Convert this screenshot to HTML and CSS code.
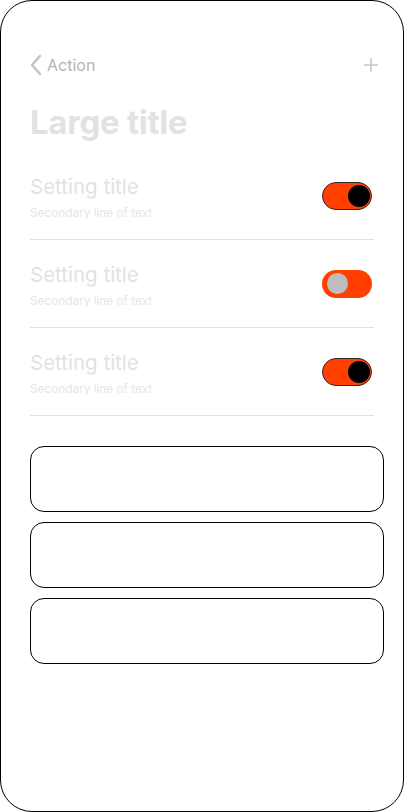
FILE: index.html
```html
<!DOCTYPE html>
<html>
<head>
<meta charset="utf-8">
<link rel="stylesheet" href="styles.css">
</head>
<body>
<div class="phone">
  <div class="nav">
    <div class="back">
      <svg class="chev" width="14" height="22" viewBox="0 0 14 22"><path d="M11 2 L3 11 L11 20" fill="none" stroke="#c4c4c4" stroke-width="2.6" stroke-linecap="round" stroke-linejoin="round"/></svg>
      <span class="back-label">Action</span>
    </div>
    <svg class="plus" width="16" height="16" viewBox="0 0 16 16"><path d="M8 1 V15 M1 8 H15" stroke="#c8c8c8" stroke-width="1.6"/></svg>
  </div>
  <h1 class="title">Large title</h1>
  <div class="list">
    <div class="row">
      <div class="texts">
        <div class="row-title">Setting title</div>
        <div class="row-sub">Secondary line of text</div>
      </div>
      <div class="toggle on"><span class="knob"></span></div>
    </div>
    <div class="row">
      <div class="texts">
        <div class="row-title">Setting title</div>
        <div class="row-sub">Secondary line of text</div>
      </div>
      <div class="toggle off"><span class="knob"></span></div>
    </div>
    <div class="row">
      <div class="texts">
        <div class="row-title">Setting title</div>
        <div class="row-sub">Secondary line of text</div>
      </div>
      <div class="toggle on"><span class="knob"></span></div>
    </div>
  </div>
  <div class="cards">
    <div class="card"></div>
    <div class="card"></div>
    <div class="card"></div>
  </div>
</div>
</body>
</html>
```
FILE: styles.css
```css
* { box-sizing: border-box; }
html, body { margin: 0; padding: 0; background: #fff; }
body { font-family: Inter, "Noto Sans", sans-serif; }
.phone {
  width: 404px;
  height: 812px;
  border: 1px solid #000;
  border-radius: 32px;
  padding: 54px 19px 0 29px;
  background: #fff;
  overflow: hidden;
}
.nav {
  height: 20px;
  margin-right: 5px;
  display: flex;
  align-items: center;
  justify-content: space-between;
}
.back { display: flex; align-items: center; gap: 4px; }
.chev { display: block; margin-left: -1px; }
.back-label { font-size: 16px; color: #b4b4b4; line-height: 20px; }
.plus { display: block; }
.title {
  margin: 27px 0 10px 0;
  height: 40px;
  font-size: 33px;
  line-height: 40px;
  font-weight: 700;
  color: #e2e2e2;
  letter-spacing: -0.3px;
}
.list { margin-right: 10px; }
.row {
  height: 88px;
  border-bottom: 1px solid #e2e2e2;
  display: flex;
  align-items: center;
  justify-content: space-between;
}
.texts { display: flex; flex-direction: column; gap: 7px; margin-top: 4px; }
.row-title { font-size: 20.5px; line-height: 24px; color: #e2e2e2; }
.row-sub { font-size: 11.8px; line-height: 14px; color: #e6e6e6; }
.toggle {
  width: 50px;
  height: 28px;
  border-radius: 14px;
  background: #ff4000;
  margin-right: 2px;
  display: flex;
  align-items: center;
}
.toggle.on { border: 1px solid #2a2a2a; justify-content: flex-end; padding-right: 1px; }
.toggle.on .knob { width: 22px; height: 22px; border-radius: 50%; background: #000; }
.toggle.off { justify-content: flex-start; padding-left: 5px; }
.toggle.off .knob { width: 21px; height: 21px; border-radius: 50%; background: #bdbdbd; }
.cards {
  margin-top: 30px;
  display: flex;
  flex-direction: column;
  gap: 10px;
}
.card {
  height: 66px;
  border: 1px solid #000;
  border-radius: 14px;
}
```
